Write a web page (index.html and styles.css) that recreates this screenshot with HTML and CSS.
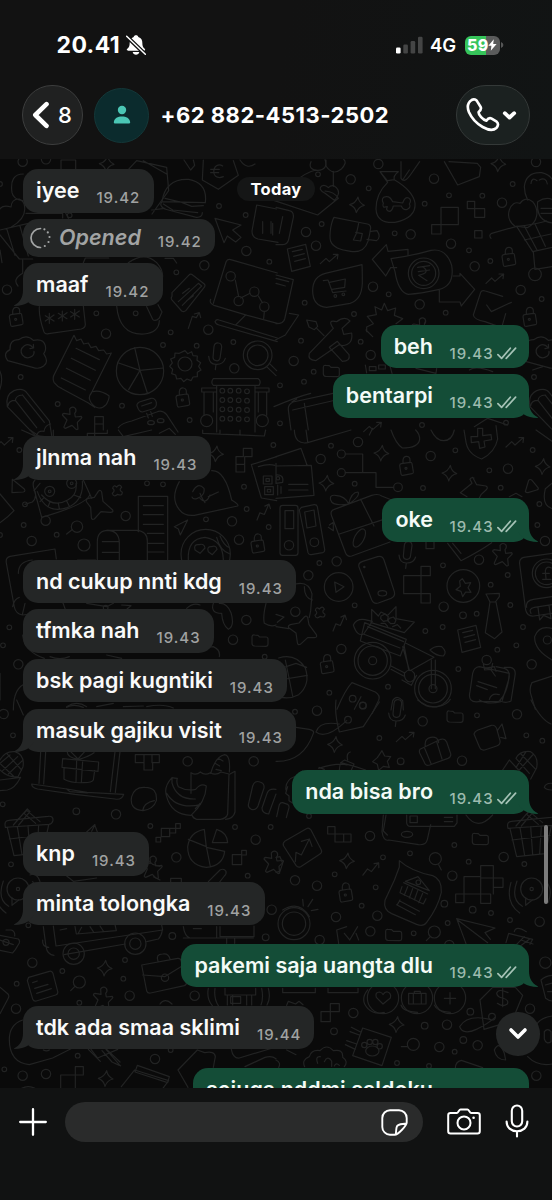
FILE: index.html
```html
<!DOCTYPE html>
<html lang="id">
<head>
<meta charset="utf-8">
<title>Chat</title>
<link rel="stylesheet" href="styles.css">
</head>
<body>
<header class="top">
  <div class="status">
    <span class="clock">20.41</span>
    <svg class="bell" width="20" height="20" viewBox="0 0 60 60"><path d="M30 1c4 0 6 2 7 5 9 3 12 10 12 18 0 10 2 13 7 17 3 4 1 6-2 6H6c-4 0-5-3-2-6 5-4 7-8 7-17 0-9 4-15 12-18 1-3 3-5 7-5zM20 51h20c-2 11-18 11-20 0z" fill="#fff"/><path d="M2 4l56 54" stroke="#111212" stroke-width="12"/><path d="M2 4l56 54" stroke="#fff" stroke-width="4.5" stroke-linecap="round"/></svg>
    <svg class="signal" width="27" height="18" viewBox="0 0 27 18"><rect x="0" y="11.5" width="4.6" height="6" rx="1.3" fill="#fff"/><g fill="#444545"><rect x="7.3" y="8.5" width="4.6" height="9" rx="1.3"/><rect x="14.6" y="5" width="4.6" height="12.5" rx="1.3"/><rect x="22" y=".8" width="4.6" height="16.7" rx="1.3"/></g></svg>
    <span class="net">4G</span>
    <span class="battery"><span class="level">59</span><svg width="9" height="12" viewBox="0 0 9 12"><path d="M5.8.2L.4 6.8h3L2.8 11.8 8.6 5H5.2z" fill="#fff"/></svg></span>
    <svg class="nub" width="3" height="6" viewBox="0 0 3 6"><path d="M0 0q2.4 1 2.4 3T0 6z" fill="#555656"/></svg>
  </div>
  <div class="nav">
    <div class="back"><svg width="18" height="28" viewBox="0 0 18 28"><path d="M14.5 3.2L3.3 14l11.2 10.8" fill="none" stroke="#fff" stroke-width="4.6" stroke-linecap="round" stroke-linejoin="round"/></svg><span>8</span></div>
    <div class="avatar"><svg width="18" height="20" viewBox="0 0 18 20"><circle cx="9" cy="5" r="4.2" fill="#4bc6b4"/><path d="M.8 17.5C1 13 5 11.4 9 11.4s8 1.6 8.2 6.1q0 1-1.2 1H2q-1.200 0-1.200-1z" fill="#4bc6b4"/></svg></div>
    <h1 class="name">+62 882-4513-2502</h1>
    <div class="call"><svg width="34" height="34" viewBox="0 0 102 102"><path d="M17 6C24 2 31 5 34 11L44 27C47 33 44 37 38 42C36 50 52 66 61 68C66 61 71 59 77 62L92 71C98 76 97 84 91 90C82 98 66 96 50 87C32 77 17 61 9 43C3 28 5 14 17 6Z" fill="none" stroke="#fff" stroke-width="8" stroke-linejoin="round"/></svg><svg width="15" height="11" viewBox="0 0 15 11"><path d="M2.800 3.200l4.700 4.300 4.700-4.300" fill="none" stroke="#fff" stroke-width="3.800" stroke-linecap="round" stroke-linejoin="round"/></svg></div>
  </div>
</header>

<main class="chat">
<svg class="doodles" width="552" height="929" viewBox="0 159 552 929">
<defs>
<circle id="s" r="7"/><circle id="m" r="10"/><circle id="b" r="14"/>
<path id="spark" d="M3-24Q6-6 22 1Q5 4-2 23Q-5 6-22-1Q-4-5 3-24z"/>
<g id="lock"><path d="M-19-8q0-5 5-6l26-4q5-1 6 4l4 24q1 5-4 6l-27 5q-5 1-6-4zM-9-15v-10q2-12 12-11 9 1 9 11v8"/><circle r="3"/></g>
<path id="trend" d="M-27 13l17-16 10 10 25-22M12-15h14l-2 14"/>
<path id="pin" d="M-8-31q8-10 17-2 5 8-2 15l2 11 18-2q3 3 0 6l-12 12 2 20q-3 3-6 1l-12-12-20 9q-5-1-4-5l9-20-14-15q0-4 5-5l18 3z"/>
<path id="folder" d="M-24-12q1-6 7-5l11 1 5 5h19q6 0 6 6v15q0 7-7 7l-34-1q-7-1-7-8z"/>
<g id="mic"><path d="M-8-32q2-12 13-11 10 1 10 12l-5 34q-3 9-12 7-9-1-9-10zM-24-3q2 24 22 24 22 1 28-18M-2 21l-2 16"/></g>
<g id="page"><path d="M-33-28l55-14 14 66-56 15zM-18-20l30-7M-14-6l32-8M-11 9l32-8"/></g>
<g id="pencil"><path d="M-48-45q-7-35 20-48 27-10 38 6l68 85 8 49-50-5zM-24-64l64 82M-3-80l66 82M40 43q2-17 22-14 3-19 20-22M-46-48q2-16 22-16 2-15 21-16"/></g>
<g id="cloud"><path d="M-55 22q-16-22 7-33-2-30 26-30 24-18 44 2 30-7 36 16 3 15-5 24 17 25 0 37-14 11-33 4z"/><path d="M21-17q-11-14-26-6-16 12-6 28 13 15 29 4 8-8 6-15M12-14l11-2-1-11"/></g>
<g id="cart"><path d="M-65-5q-8-9 2-15l75-21 48 76 90-20M12-41q50-4 90-16M35 0l80-18M35-42l38 72M68-46l30 65M62 36l5 52 75-12"/><circle cx="67" cy="103" r="19"/></g>
<g id="basket"><path d="M-74-13q-5-20 10-21l118-12q16-2 15 12-2 10-12 12l-117 8zM-68-12l20 84 86-9 18-83M-38-15l14 84M-6-18l6 84M26-20l-5 84M-62 22L52 8M-50-20l42-48 8 8-34 40M30-30l-40-34-8 9 35 30"/></g>
<g id="radar"><circle cx="0" cy="0" r="33"/><circle r="5"/><path d="M-18 27v22l20-16M-44-24q-20 55 16 76M-62-20q-18 60 26 92M44-22q20 25 6 62"/></g>
<g id="case"><path d="M-55-35l108-20q8-1 10 6l16 65q2 8-6 11L-28 49q-9 2-12-6zM-52-5l66 5 56-34M-6-46q-8-22 14-22 18-3 22 15"/><circle cx="15" cy="3" r="11"/></g>
</defs>
<g class="ink">
<g transform="translate(0 150) scale(.33333)">
<path d="M183 65V30h44v35M455 180l40-5M365 80l45-48 90 20 6 70-50 70M500 72l-70-40M552 30l12 18 8 12 12-14-4-16M610 30l-3 60 48 28 60-42-15-44M720 30q20 30 45 12M-5 185q10-24 38-14 2-25 25-24 18 8 16 32 0 28-40 52M70 72q-42 0-34 56 4 20 32 24M0 240l85-20 12 95M0 255l58 72h40M20 236l25 80M60 228l25 90M0 300l6 38M68 330v40q-32 18-14 38M78 190h110v14M205 205l-10-20"/>
<path d="M486 155q10-70 80-67 57 10 50 70zM486 155q-10 12 8 22l95 25q18 1 18-14M495 145l50 12 30 12 35-2M490 162l28 18 75 8M645 205l78 20-25 15 25 22-16 14-25-18-10 20zM770 165l60 12M770 165q-10 55-14 78 0 20 18 24l60 10M788 215v35M818 220v35"/>
<path d="M516 428l50-52q6-6 12-1l34 26q6 5 0 12l-54 68q-6 6-13 2l-28-32q-6-6-1-12zM535 455l60-55 10 8-58 58M548 430l20-15M560 452l20-15M640 460l38-124q4-10 14-7l140 40M632 448q-5 12 10 18l100 30 90 24M645 515q4-8 12-5l175 54M645 515q2 8 12 10l175 50M735 497l-28 28M706 390l10 50M722 444l28-14M775 438l12 20M793 485l-2 20"/>
<circle cx="692" cy="379" r="14"/><circle cx="716" cy="453" r="14"/><circle cx="763" cy="425" r="14"/><circle cx="793" cy="470" r="14"/>
<path d="M118 470q-2 30 14 76 4 8 14 5l98-14q12-3 12-14l-6-55M148 490v30M136 497l26 16M162 495l-26 18M187 483v30M175 490l26 16M201 488l-26 18M224 478v30M212 485l26 16M238 483l-26 18M350 468q8 88 82 84 45-5 46-40M440 470l18 38q8 8 20-4l8-18-12-22M385 338q50-35 85 0 25 28 15 55M250 338l6-14h70M495 325h25l10 14M565 535l12-36 12 4 8-14M583 492l15-4 4 15"/>
<path d="M222 556l8 16 13-5 8 15 14-3 8 14 15-4 8 13 15-2 9 12 14-3-60 120q-12 14 0 30 22 28 45 4 10-17 8-26-28-18-48-12M222 556l-58 115q-8 14-2 26 10 13 24 19l78 42 20 14M228 595l70 34M214 625l72 36M199 655l72 36M184 684l72 36"/>
<circle cx="420" cy="663" r="71"/><path d="M420 661l-16-68M420 661l-64-22M420 661l70-7M420 661l22 68M420 661l-34 58"/>
<circle cx="555" cy="642" r="21"/><path d="M555 602l8 9 12-6 4 12 13 1-1 13 11 7-6 11 7 11-11 7 0 13-13 1-6 11-12-5-10 8-8-10-13 2-3-12-12-4 3-13-9-9 8-10-5-12 12-5 1-13 13 1z"/>
<circle cx="773" cy="616" r="43"/><circle cx="773" cy="616" r="31"/><path d="M800 650l28 27M808 640l22 22M-5 655q20 30 0 75"/>
<path d="M640 686h135q10 8 2 20H640q-9-9 0-20zM650 706v140M765 706v140M650 714h-45v12h45M765 714h42v12h-40M612 726v70M640 726v60M775 726v60M800 726v70"/><circle cx="620" cy="812" r="18"/><circle cx="787" cy="812" r="18"/>
<g><use href="#s" x="667" y="722"/><use href="#s" x="691" y="722"/><use href="#s" x="716" y="722"/><use href="#s" x="741" y="724"/><use href="#s" x="667" y="750"/><use href="#s" x="691" y="750"/><use href="#s" x="716" y="751"/><use href="#s" x="741" y="752"/><use href="#s" x="667" y="778"/><use href="#s" x="691" y="778"/><use href="#s" x="716" y="779"/><use href="#s" x="741" y="780"/><use href="#s" x="667" y="806"/><use href="#s" x="691" y="806"/><use href="#s" x="716" y="807"/><use href="#s" x="741" y="808"/></g>
<path d="M412 770q-4-8 6-14l35-11q12-2 16 12 2 15-12 20l-30 9q-10 0-15-16zM425 768l30-10M355 833q10-14 40-20l75-27q16-8 30 8l34 52M440 790l5 14M452 785l5 14"/><ellipse cx="453" cy="818" rx="10" ry="6"/><ellipse cx="482" cy="812" rx="10" ry="6"/><path d="M284 840v-40h26v40M284 822h26"/>
<use href="#pencil" x="70" y="815"/><use href="#cloud" x="78" y="610"/><use href="#lock" x="47" y="508"/><use href="#lock" x="547" y="750"/><use href="#pin" x="217" y="808"/><use href="#spark" x="320" y="42"/><use href="#mic" x="650" y="622"/>
<path d="M668 48q-12-8-22 2-10 15 0 28 10 8 24 2M632 58h26M632 68h24"/>
<g><use href="#b" x="68" y="35"/><use href="#b" x="138" y="28"/><use href="#s" x="0" y="102"/><use href="#s" x="657" y="168"/><use href="#s" x="737" y="195"/><use href="#s" x="209" y="196"/><use href="#b" x="739" y="303"/><use href="#s" x="808" y="335"/><use href="#b" x="613" y="346"/><use href="#s" x="529" y="367"/><use href="#b" x="21" y="419"/><use href="#s" x="289" y="490"/><use href="#s" x="407" y="490"/><use href="#b" x="318" y="551"/><use href="#s" x="512" y="547"/><use href="#b" x="625" y="539"/><use href="#s" x="489" y="585"/><use href="#s" x="590" y="587"/><use href="#s" x="700" y="576"/><use href="#b" x="703" y="655"/><use href="#s" x="62" y="681"/><use href="#s" x="173" y="762"/><use href="#s" x="366" y="767"/><use href="#s" x="569" y="810"/></g>
</g>
<g transform="translate(276 150) scale(.33333)">
<path d="M105 35q-10 24 20 26 32-2 22-32M150 30v18q20 30 45 10 20-20 8-30M120 60q-28 5-70 40L-25 145l150 50 62-50q-12-20-40-22M172 64v45M147 130q-22-12-10-22 10-6 20 5 12-12 24 0 16 16-6 38zM375 35v50q10 16 28-10l28-40M505 35l40 70 65-25 4-28-10-12-85-5M380 90l20-30"/>
<path d="M312 65l55 0q-16 12-12 24 56 33 62 70 4 45-60 58-55 4-57-40 0-46 35-80zM335 92l20-3M312 65l22 27"/><path d="M334 170q-18 5-12-10-9-18 8-20 12-2 20 15l30 4q6-20 18-15 10 6 2 18 6 10-6 16-12 4-18-10l-24 0q-4 16-12 16-12-2-6-14z"/>
<path d="M174 202l100 20q10 2 10 12-2 16-8 40-12 36-52 30-50-5-60-30-4-12 0-40 4-22 10-32zM248 220l-6 28-10 22 22 3 5-22-20-4M285 244l18-2q14 20-2 30l-28-4"/>
<path d="M0 172l40 10q14 3 12 20l-14 66q-3 15-18 16l-20 0M-15 215v35M20 200l-10 50M0 375l52 14-26 118q-4 15-26 14M40 490l28 5-40 60-30 15M0 400l28 8M0 385l38 10"/>
<path d="M289 328l42-44 5 20 60-6 0 18M289 328l40 50 15-25 18 0"/><path d="M345 326q60-8 120-25 45-8 62 45 10 62-40 73-55 12-90 14-30-5-40-68zM532 378l20 0v-8l44 48-40 50-4-12h-62v-36"/><circle cx="443" cy="370" r="46"/><circle cx="443" cy="370" r="36"/><path d="M425 352l36-5M427 365l34-5M440 350q26 18-12 26l25 16"/>
<path d="M258 344l-110 26q-38 10-38 52 0 46 42 50l70-12q35-10 37-60 0-40-1-56zM142 392l14-2 14 38 40-5M160 397l48-10-2 25-38 6"/><circle cx="178" cy="438" r="4"/><circle cx="202" cy="433" r="4"/>
<path d="M495 172h52v52h-52zM467 224h28v28h-28zM574 154h22v22h-22zM596 176h30v26h-30zM596 242h22v22h-22z"/>
<path d="M272 545v-14l20-10-18-22 27-5-4-24 20 10 8-20 10 22 24-8-4 22 25 10-20 15M290 560l-20-20M592 495l22-68q4-8 14-4l52 16M592 495q2 14 35 20l50 18 12-42M632 465l14 20 60-28"/>
<path d="M100 610l72-75q-20-28 10-20 25-18 40-2l-24 22 5 18 24-4q5 35-28 38l-10-3-70 48q-25-2-19-22zM160 592l24-18 35 40q5 20-20 20zM92 510l28 5 5 14-10 10-16-8zM122 535l22 22"/>
<path d="M745 110q5-45 52-42 35 8 40 42M745 110q0 20 10 40M700 180q10-28 32-20 15-22 38-5 16 20 12 42-4 24-28 36l-38-5q-25-20-16-48zM785 155q25-16 45-6v70q-50-5-45-64zM795 175h35M795 190h35M765 100q2-20 18-8M790 90q20-10 24 12"/>
<path d="M-6 770q70-30 110-40M45 840l-8-60q-2-16 14-24l120-26M50 780l130-30M85 760l12 80M48 755l14-8M268 645l4 24M340 640l8 30M280 650h20v12h-20zM308 645h20v12h-20zM420 655l60 15 2-15M580 660q20-15 70 5M770 660l30-10M595 830l40-25 60 20"/>
<use href="#cart" x="710" y="270"/><use href="#cloud" x="795" y="610"/><use href="#pencil" x="810" y="815"/>
<use href="#page" x="67" y="325"/><use href="#trend" x="160" y="328"/><use href="#trend" x="657" y="387"/><use href="#lock" x="697" y="328"/><use href="#lock" x="760" y="508"/><use href="#pin" x="438" y="540"/><use href="#folder" x="166" y="663"/><use href="#spark" x="243" y="165"/><use href="#spark" x="667" y="42"/><use href="#trend" x="290" y="832"/>
<g><use href="#b" x="307" y="42"/><use href="#s" x="126" y="73"/><use href="#b" x="224" y="88"/><use href="#s" x="278" y="115"/><use href="#b" x="474" y="86"/><use href="#b" x="780" y="36"/><use href="#s" x="710" y="102"/><use href="#s" x="519" y="136"/><use href="#s" x="619" y="137"/><use href="#s" x="446" y="161"/><use href="#b" x="678" y="158"/><use href="#s" x="137" y="222"/><use href="#b" x="90" y="246" /><use href="#b" x="120" y="287"/><use href="#s" x="356" y="250"/><use href="#b" x="404" y="253"/><use href="#b" x="525" y="281"/><use href="#s" x="579" y="301"/><use href="#s" x="643" y="333"/><use href="#b" x="596" y="349"/><use href="#b" x="291" y="410"/><use href="#s" x="338" y="433"/><use href="#s" x="86" y="458"/><use href="#b" x="431" y="463"/><use href="#s" x="509" y="488"/><use href="#s" x="234" y="492"/><use href="#b" x="734" y="420"/><use href="#s" x="797" y="447"/><use href="#s" x="75" y="572"/><use href="#s" x="254" y="575"/><use href="#b" x="284" y="615"/><use href="#b" x="53" y="633"/><use href="#s" x="113" y="665"/><use href="#s" x="84" y="695"/><use href="#s" x="12" y="706"/><use href="#s" x="774" y="681"/><use href="#s" x="438" y="825"/><use href="#s" x="690" y="818"/><use href="#s" x="12" y="820"/></g>
</g>
<g transform="translate(0 430) scale(.33333)">
<path d="M65 0l50 22M90 0l30 20M160 0v22M262 20v-10h60V0M284 20V0M355 0l15 20 85-20M478 10l30-15 18 18M608 0v10l185 8 4-18M660 0v10M720 0v15"/>
<path d="M37 148l35 28q6 8-2 10l-34 2zM0 192l42 50q-18 20-42 36M75 223l22-7q14-12 8-32M105 150q-10 8-2 30l22 82q140-40 145-70M275 205l-25-55M120 160l-18 22M112 185q25 70 90 48 50-20 45-80M125 195q35 40 78 15 30-15 25-50M130 205l-10 10M150 215l-6 16M175 220l3 16M200 213l8 16M222 195l20 8"/><circle cx="149" cy="184" r="15"/><circle cx="149" cy="184" r="4"/><circle cx="215" cy="160" r="15"/><circle cx="215" cy="160" r="4"/>
<path d="M305 186l4 28 29 26q3 7-7 7l-28-2-20 22q-8 4-9-5l-2-30-12-16q-5-7 5-11l18-3 12-18q6-6 10 2zM338 175q2-12 12-4 10-12 15 1-10 8 2 15 0 12-14 6-12 10-16-3 10-8 1-15z"/>
<path d="M415 305V199h88v190M430 227h60M430 254h60M430 283h60M442 310h50M442 340h50M442 366h50M292 390v-55q0-34 32-34h85q34 2 33 34v55M320 301q38 0 38 38v50M307 335h48M307 367h48M232 390h55"/>
<path d="M538 155q-28 50 0 84 15 20 45 17l130-28q5-4-18-18-20-90-60-88M578 185q15-30 34-10 4 20-20 30-12 5-16-4M600 205q18 20 30-10M600 190q8 20 15 28M625 200l30-14M523 290l40-20-22 45-6-18z"/>
<path d="M200 312l16-13"/><circle cx="231" cy="290" r="17"/><circle cx="252" cy="345" r="18"/>
<circle cx="617" cy="372" r="74"/><path d="M565 390q-4-64 50-68 54 8 55 68M585 360q-5-18 12-16 16-5 18 10l-15 16zM625 365q-6-16 10-15 14-5 16 8l-14 16zM650 322q10 40 40 50M660 318q12 30 28 34"/>
<path d="M708 126V80h22V55h26v25h-22v46zM708 103h24M830 80l-76 24 30 100 46 8M775 110q30-10 50-4M790 138h26v24h-26zM794 170h26v24h-26zM798 146h10v8h-10zM802 178h10v8h-10z"/>
<path d="M165 357l-135 22q-14 4-11 20l24 132q4 20 24 24l130-14-8-22M38 530q5-24 20-28M165 357l4 30M55 430q0-36 42-40M75 520l-8 34M640 520q-10 30 25 30 2 35 20 48 20-10 8-50-12-30-35-28M798 520q-10 40-5 60 20 12 35 5M260 520l60 10 20-10M365 525l28 2-12 10M560 535q20-18 40-10M560 660l80-10q22 10 18 30M40 840q0-70 40-80M0 730v80M68 615q5 50 65 70M150 680q30 12 58 0M320 675l45 10M200 830q30-20 60 0M290 830l50-10M370 830l60-2M440 830q50-10 80 4"/>
<use href="#trend" x="13" y="38"/><use href="#trend" transform="translate(790 247) rotate(-25)"/><use href="#spark" x="648" y="72"/><use href="#lock" x="772" y="348"/><use href="#folder" x="780" y="632"/>
<g><use href="#s" x="58" y="60"/><use href="#s" x="441" y="160"/><use href="#s" x="489" y="163"/><use href="#s" x="732" y="170"/><use href="#s" x="75" y="223"/><use href="#b" x="137" y="272"/><use href="#s" x="71" y="285"/><use href="#b" x="377" y="258"/><use href="#s" x="618" y="268"/><use href="#s" x="740" y="237"/><use href="#b" x="696" y="274"/><use href="#s" x="806" y="291"/><use href="#s" x="170" y="314"/><use href="#b" x="95" y="333"/><use href="#s" x="0" y="315"/><use href="#b" x="717" y="329"/><use href="#s" x="820" y="45"/><use href="#b" x="739" y="570"/><use href="#b" x="699" y="629"/><use href="#s" x="28" y="592"/><use href="#s" x="9" y="646"/><use href="#b" x="55" y="703"/><use href="#s" x="794" y="680"/><use href="#s" x="317" y="533"/></g>
</g>
<g transform="translate(276 430) scale(.33333)">
<path d="M55 0q2 45 40 38l130-38M90 0l5 35M345 0q14 40 34 54 48 0 52-26 0-16-12-28M465 0q15 32 38 32 25 0 32-32M564 0l5 30q4 42 48 57 40-20 48-60l-5-40M585 20h20V-5h15v22l25-3 2 15-23 4 3 18-16 4-3-20-22 3zM280 15l10-20M780 0l50 35"/>
<path d="M0 80l75-25 18 50M0 108l106-2 8 90-114 9M0 100v60M38 163h58M38 180h58M0 135q25-2 20 22l-20 3M5 165v30M15 170v20"/><circle cx="6" cy="145" r="5"/>
<circle cx="196" cy="72" r="12"/><circle cx="196" cy="128" r="12"/><circle cx="366" cy="172" r="13"/><path d="M208 72h52v54M208 128h92v44h52"/>
<path d="M20 226h38q8 0 8 8v134q0 8-8 8H20q-8 0-8-8V234q0-8 8-8zM27 242h26v54H27zM76 232l38-8q8-1 10 6l22 128q1 8-6 10l-34 6q-8 1-10-6L70 240zM86 246l28-6 6 48-27 6z"/><circle cx="39" cy="346" r="14"/><circle cx="115" cy="337" r="13"/>
<path d="M175 238q-14 4-8 20l42 112q6 12 18 8l115-42M175 238l112-42q20-6 30 2l30 12M190 312l140-46M254 208l40 80M218 222q-48 8-54-12-4-16 14-14 30 2 40 26zM218 222q8-36 28-36 8 12-28 36z"/><ellipse cx="250" cy="324" rx="14" ry="30" transform="rotate(28 250 324)"/><path d="M160 285l12-8 0 25-15-10"/>
<path d="M590 142l12 22 28 4q8 5 0 12l-15 14-5 10M553 188l35-28-6-12q4-8 12-4M553 188l20 12M748 185l10-34q4-5 10 0l18 22q3 5-4 7l-26 8q-6 0-8-3zM828 160l-20 16q-12 50 20 60M700 200l20-10 18 10"/>
<circle cx="188" cy="471" r="43"/><path d="M176 456l28 14-24 17zM260 394l45-14q14-4 19 10l31 95q4 14-10 20l-38 14q-14 4-20-10l-38-98q-4-12 11-17z"/><ellipse cx="319" cy="490" rx="13" ry="8"/><circle cx="265" cy="411" r="2"/>
<path d="M435 409h28v28h-28zM383 437h52v54h-52zM435 437v54M435 491h28v28h-28zM450 330v26h24v-26M515 340l40 52q55-28 92-54M530 340l25 30"/>
<circle cx="562" cy="468" r="49"/><path d="M559 446l9 14 16-2-8 15 9 14-16-1-9 14-5-16-15-5 13-10-2-16z"/>
<path d="M828 370l-85 12q-14 4-12 20l18 138q5 20 24 18l55-8M752 532q-4-20 20-24l55-8M765 550q-8-14 10-18l54-8M786 532l5 38 12-14 22 10-6-40"/><circle cx="812" cy="430" r="43"/><circle cx="812" cy="430" r="34"/><path d="M826 414q-15-8-18 8l2 24M800 430h20M800 448h25"/>
<path d="M630 492l40-2 0 10-12 16h-16zM642 516h18l18 90-22 20-28-18zM58 462q40-10 50 30l-4 50-4 20M85 470q0 35 25 40M95 562l4 22 22 30q4 8-6 9h-20l-22 20q-8 4-9-6l-4-28-22-16q-3-6 5-9l26-5 16-18q6-6 10 1zM0 553l24 8-20 16M0 590l38 6M118 541q2-12 12-4 10-12 15 1-10 8 2 15 0 12-14 6-12 10-16-3 10-8 1-15z"/>
<path d="M232 585q10-20 35-16l22 5-26 38q-20 8-31-27zM266 578l125 50-18 50-120-45zM275 590l108 45M262 612l110 42M287 572v-34l20 20 8-12 20 10 25-26v36l55 10-30 32-100-30zM390 640l84 42-72 40M380 650l20 70M384 645l14 74M345 708l40 20M345 718l38 20M466 690v86M478 690v86M462 660q15-14 35-10 18 16 5 28-22 0-40-18zM385 730q16-20 30 0 5 20-12 26-18 0-18-26zM378 750l28 16 16-30"/><circle cx="290" cy="692" r="55"/><circle cx="290" cy="692" r="44"/><circle cx="290" cy="692" r="12"/><circle cx="471" cy="776" r="55"/><circle cx="471" cy="776" r="43"/><circle cx="471" cy="776" r="12"/>
<path d="M315 558l12-6 10 8-3 12-12 2-8-8zM340 565l12-4 8 9-4 10-12 1-8-8zM315 580l12 0 8 9M350 590l14-6 10 10"/>
<path d="M8 684q50-16 80 30 16 50-20 80-30 16-62 5M28 690l22 108M0 720l60-20 32 12M10 750l84-14"/>
<path d="M590 730q4-18 20-20l90 20q-4 60-32 85l-60 0q-34 4-26-30zM640 808q6-20 30-14M660 710l25 5q18 5 14 30l-20 66M685 712h18q18 4 14 25l-12 76q-15 8-32 0M606 755l56 18M602 767l32 12"/><circle cx="632" cy="690" r="14"/><path d="M622 702l4 18 18-2 14 20M650 700l-4 18M625 715l30-5 5 14"/>
<path d="M828 595q-40-10-52 25-2 40 52 70M828 738l-60 20q-10 18-2 40l12 40"/><circle cx="814" cy="630" r="12"/>
<path d="M228 758l70 28q16 10 10 25l-20 40M228 758q-20 20-45 80M345 840l5-28q12-20 30 0l2 28"/><circle cx="230" cy="806" r="10"/><circle cx="260" cy="826" r="10"/><path d="M255 800l-20 38"/>
<use href="#page" x="578" y="628"/><use href="#mic" x="393" y="378"/><use href="#lock" x="390" y="115"/><use href="#lock" x="152" y="710"/><use href="#trend" x="717" y="38"/><use href="#trend" transform="translate(190 580) rotate(-25)"/><use href="#pin" x="680" y="377"/><use href="#spark" x="316" y="70"/><use href="#spark" x="151" y="160"/><use href="#spark" x="520" y="130"/><use href="#spark" x="800" y="110"/>
<g><use href="#b" x="246" y="36"/><use href="#s" x="165" y="47"/><use href="#b" x="134" y="87"/><use href="#b" x="464" y="78"/><use href="#s" x="538" y="61"/><use href="#s" x="640" y="121"/><use href="#b" x="696" y="116"/><use href="#s" x="770" y="60"/><use href="#s" x="236" y="161"/><use href="#s" x="441" y="174"/><use href="#s" x="674" y="173"/><use href="#s" x="790" y="222"/><use href="#s" x="784" y="285"/><use href="#b" x="807" y="333"/><use href="#s" x="130" y="399"/><use href="#b" x="182" y="394"/><use href="#b" x="97" y="436"/><use href="#s" x="501" y="406"/><use href="#b" x="609" y="389"/><use href="#s" x="695" y="435"/><use href="#s" x="644" y="464"/><use href="#s" x="236" y="526"/><use href="#b" x="58" y="545"/><use href="#b" x="503" y="530"/><use href="#m" x="561" y="556"/><use href="#s" x="602" y="551"/><use href="#s" x="703" y="525"/><use href="#s" x="448" y="603"/><use href="#s" x="500" y="591"/><use href="#s" x="741" y="591"/><use href="#s" x="721" y="646"/><use href="#s" x="664" y="659"/><use href="#b" x="196" y="657"/><use href="#b" x="767" y="703"/><use href="#s" x="547" y="717"/><use href="#s" x="336" y="770"/><use href="#s" x="160" y="788"/></g>
</g>
<g transform="translate(0 700) scale(.33333)">
<path d="M50 0l20 45M200 22q20-12 50 0M0 180q15-28 45-25 30 10 24 45l-15 30q-30 4-54-20M0 190l30-25M8 212l45-42M25 222l42-40M20 160l45 50M0 190l40 38M0 240l62-8q-18 35-40 38l-22 2"/>
<path d="M122 155l-5 95M137 155l-6 97M345 155l-14 120M360 155l-14 122M95 252l106 15 60 10 110 6q-6 18-26 14l-120-14-112-16q-18-4-18-15zM200 267l10 8 52 4M188 176l108 10-2 28-108-12zM192 204l0 34q22 12 60 10 24 0 28-8l4-28M230 180l-2 65M248 182l-4 66M236 178q-35-5-34-22M238 178q30-10 44-20M212 155l22 22 20-22"/>
<path d="M406 164h72v24H458v22h-26v-22h-26zM432 164v24M456 164v24M516 233q8 2 16 2-4 12 3 25 25 14 52 8 16-20 32-10-2 48-46 88-60-2-74-60-8-26 17-53zM516 233v16q14 50 70 48M500 280q30 50 102 34M600 310l-14 16M573 280v-62q15 10 28-2 14 12 30 2 16 10 32-2l24 6-4 120q-4 14-22 16H590q-10-2-14-12M690 222l15-8v122q-5 20-28 22M632 220q14-50 42-56 18 2 14 52M645 190l14 8M655 175l14 8M648 208l16 4M395 290q8-30 40-28 38 0 34 40-8 25-40 30-42-4-34-42zM428 332q4-24 35-30"/>
<path d="M758 258q6-18 22-12 14 4 12 18l-18 54q-6 14-20 10-12-6-8-18zM802 278q6-14 26-10M786 324q0 16 20 18l22-60M786 324l16-46M260 396l24-22 8 22M275 394l10-20"/>
<path d="M468 412h14v14h-14zM484 385h25v25h-25zM509 385h18v14h-18zM527 371h14v14h-14zM697 464h28v30h-28zM725 451h14v14h-14zM512 545v-10h32v10M90 525q20-10 30 20M200 528l20 16 70-10M440 485l-4-12 22 20 22 6M460 530l20 10"/>
<path d="M613 388q-44 8-50 52 0 55 56 62 50-4 55-48l-55-12zM650 388q32 10 33 40l-46 0zM619 440l12 60M619 440l-54-22M625 545l35-35q12-6 18 4 2 8-5 14l-14 18"/>
<path d="M130 680l8 60q4 25 24 26M160 678l8 60 320-48-4-20M192 764l184-32M440 725l35-8q10-10 12-28M128 720q-2 20 18 22M225 680l4 22 120-10-4-18M180 690l20-4M245 682l-10 18M270 680l10 15M300 678l10 15M550 680q4 30 20 34h80l0-34M660 680v30h102V678M550 714h210M680 714v16M704 714v16M580 686h24"/>
<circle cx="221" cy="761" r="32"/><circle cx="221" cy="761" r="17"/><circle cx="406" cy="731" r="32"/><circle cx="406" cy="731" r="17"/>
<path d="M-5 705l60 12q5 4 3 12l-12 20-8 10-38-8M0 720l40 14M18 690h16q12 4 10 18"/><circle cx="18" cy="727" r="9"/>
<use href="#basket" x="90" y="395"/><use href="#radar" x="54" y="567"/><use href="#pin" x="458" y="505"/><use href="#pin" x="822" y="490"/>
<g><use href="#b" x="11" y="42"/><use href="#s" x="39" y="106"/><use href="#b" x="563" y="184"/><use href="#b" x="761" y="184"/><use href="#s" x="8" y="313"/><use href="#m" x="229" y="334"/><use href="#b" x="348" y="343"/><use href="#s" x="451" y="378"/><use href="#s" x="705" y="381"/><use href="#s" x="812" y="381"/><use href="#b" x="767" y="419"/><use href="#b" x="529" y="472"/><use href="#s" x="33" y="493"/><use href="#s" x="743" y="527"/><use href="#b" x="815" y="629"/><use href="#m" x="517" y="708"/><use href="#m" x="797" y="712"/><use href="#s" x="85" y="676"/></g>
</g>
<g transform="translate(276 700) scale(.33333)">
<path d="M180 0q-5 40 10 96l72-16 48-74M190 72q-60-10-70 24 30 24 92-34M60 82l40 6q16 4 12 12-30 86-112 84M128 205q60-18 85-10M145 208l-16-6M190 210q0-24 16-30l28 12-8 18M215 180q-5-20 8-24M194 188q40 10 75 22M425 0q30 24 60 20 30-6 38-22M610 0q25 15 65 5M765 0q30 60 60 72M30 270q-4-30 30-42l20-15M35 260l-6 20 10 8 0 14 12 8"/>
<path d="M432 148l62-30q12-4 18 8l12 35q2 10-8 14l-55 20q-12 4-16-8l-14-28q-2-8 1-11zM446 145l20 48M482 125l16 52M448 140q-4-24 16-28 22-4 24 16M594 102q2-8 12-12l40-14q12-2 16 10l10 36q2 12-10 16l-36 12q-12 2-16-10zM664 92l14-20 12 44-16-4M318 152l8 16 18 2-10 14 6 18-18-3-14 12-4-18-14-8 14-12z"/>
<path d="M680 210l20-30 28 30M720 175q12-24 44-20 24 14 18 48l-18 34M720 175l40 45M735 162l42 44M750 155l-30 48M770 165l-40 45M805 262q4-14 24-12M805 262q4 8 24 8M322 345l-4 50q4 30 20 25l90 14q22 2 26-15l10-45M330 345l-8 48 12 12M392 345v24q2 12 15 10h128l8-10v-24M505 352h25M505 365h25M402 348h22v20h-22z"/><ellipse cx="393" cy="403" rx="17" ry="9"/><path d="M570 345q35 50 80 0M2 350l8-36q4-8 10-6l15 5q5 4 4 10l-8 30"/>
<path d="M26 424l65-38q8-4 14 4l31 60q3 8-4 12l-58 38q-8 4-14-4l-37-58q-4-8 3-14zM58 485l2-28 16 8 24-48M76 424l24-7 8 22M155 380h22v22h-22zM177 402h26v24h-26zM203 402h22v24h-22zM0 472l12-2 8 20-8 24-12 3"/>
<path d="M370 482q35 32 100 45 28 10 26 50-10 45-44 90-10 14-30 6l-75-32q-26-12-20-40l28-60 15-40zM388 544l38-14 34 42zM383 548l72 34M378 560l-6 18 70 34 8-16M395 560l-10 26M410 566l-10 28M425 572l-10 28M440 580l-12 28M370 602l60 32M362 614l56 30M372 600l-8 14"/><circle cx="427" cy="547" r="7"/>
<path d="M564 530h50v52h-50zM614 497h38v37h-38zM652 534h29v28h-29zM539 582h25v26h-25zM614 582h30v28h-30zM614 530v52M652 534v48"/>
<circle cx="54" cy="671" r="48"/><circle cx="54" cy="671" r="35"/><path d="M20 630q50-30 80 20M82 618l-2-20M96 620l14-22M106 632l20-4M182 690l30-10M205 700l16 20 24-40M182 690l6 40M240 700l8 20M542 656l115 28-30 14 16 20M542 656l28 75M545 660l90 68M698 700l72 18-8 15M698 700l-8 28M715 695q4-20 36 0"/>
<use href="#basket" x="770" y="398"/><use href="#radar" x="767" y="567"/><use href="#mic" x="362" y="42"/><use href="#trend" x="388" y="112"/><use href="#trend" transform="translate(285 508) rotate(-10)"/><use href="#folder" x="537" y="50"/><use href="#folder" x="613" y="417"/><use href="#folder" x="353" y="705"/><use href="#spark" x="177" y="134"/><use href="#spark" x="213" y="483"/><use href="#lock" x="208" y="585"/>
<circle cx="478" cy="476" r="18"/><path d="M488 494l8 16"/><circle cx="475" cy="696" r="18"/><path d="M463 710l-12 12"/>
<g><use href="#b" x="123" y="32"/><use href="#s" x="57" y="35"/><use href="#m" x="261" y="17"/><use href="#m" x="216" y="59"/><use href="#b" x="440" y="64"/><use href="#s" x="603" y="46"/><use href="#b" x="723" y="43"/><use href="#s" x="751" y="106"/><use href="#s" x="799" y="122"/><use href="#s" x="310" y="114"/><use href="#m" x="374" y="184"/><use href="#b" x="558" y="182"/><use href="#s" x="99" y="348"/><use href="#b" x="282" y="408"/><use href="#s" x="535" y="435"/><use href="#s" x="402" y="460"/><use href="#s" x="321" y="472"/><use href="#s" x="578" y="485"/><use href="#b" x="683" y="471"/><use href="#s" x="745" y="492"/><use href="#s" x="176" y="523"/><use href="#b" x="57" y="541"/><use href="#b" x="123" y="557"/><use href="#b" x="529" y="527"/><use href="#s" x="299" y="562"/><use href="#s" x="257" y="617"/><use href="#m" x="505" y="611"/><use href="#m" x="590" y="629"/><use href="#s" x="645" y="639"/><use href="#b" x="180" y="651"/><use href="#b" x="304" y="647"/><use href="#s" x="702" y="660"/><use href="#b" x="791" y="665"/><use href="#s" x="515" y="669"/><use href="#b" x="283" y="694"/><use href="#s" x="413" y="700"/><use href="#b" x="131" y="720"/><use href="#b" x="520" y="735"/></g>
</g>
<g transform="translate(0 940) scale(.33333)">
<path d="M86 112l62-18q8-2 11 6l14 54q2 8-6 11l-58 18q-8 2-11-6L82 122zM98 128l14-5M104 145l40-12M110 160l44-14M0 142l24 20q5 6 0 14l-24 45M68 240q-40 14-40 58 0 70 60 76l70-20 55-28M130 330q10 5 18 0M265 328l36 36M273 328l20 26 60-26M318 328l40 46q8 6 0 2l-22-10-30-34M320 328l40 38M592 330l-58 60 30 52M592 330l22 8q30-6 32 12l-6 32M625 145q-6 30 12 52M645 145q-4 30 10 52M675 145v20h92v-20M682 165v30M698 165v30M740 165v30M755 165v30M692 170h30v20h-30zM785 145q6 30-2 50M805 145q8 30-4 50M694 328q5 28 24 26l100-30M735 380l60-28q20-6 33 4"/>
<path d="M182 445v-40h44v40M226 405V380h24v25h-24M364 440l40-50 102 32-18 24M412 376l96 34-5 18-98-32zM480 192q14-20 36 0"/>
<path d="M65 445q20-10 40 0"/>
<use href="#case" x="480" y="110"/><use href="#spark" x="314" y="85"/><use href="#spark" x="317" y="416"/><use href="#pin" x="310" y="178"/>
<circle cx="238" cy="126" r="18"/><path d="M224 140l-12 12"/>
<g><use href="#b" x="97" y="68"/><use href="#s" x="187" y="93"/><use href="#s" x="375" y="60"/><use href="#s" x="370" y="116"/><use href="#s" x="50" y="131"/><use href="#b" x="389" y="167"/><use href="#b" x="584" y="167"/><use href="#b" x="48" y="206"/><use href="#s" x="238" y="188"/><use href="#s" x="233" y="347"/><use href="#b" x="465" y="357"/><use href="#b" x="68" y="407"/><use href="#b" x="138" y="402"/><use href="#s" x="13" y="388"/><use href="#s" x="512" y="330"/></g>
</g>
<g transform="translate(276 940) scale(.33333)">
<path d="M20 145v13h98v-13M156 145v13h90v-13M135 215h28v30h-28zM163 191h27v24h-27zM32 196l5-12 22 8 10-8 12 10"/>
<circle cx="321" cy="174" r="47"/><circle cx="423" cy="174" r="47"/><circle cx="522" cy="174" r="47"/><path d="M275 150q-24 30 0 55 20 20 50 12M375 195q6 20 50 22M475 195q8 20 48 22M321 192l-20-20q-5-16 10-16 8 2 10 8 6-10 14-8 12 4 8 18zM398 160h52v32h-52zM412 160v32M436 160v32M415 160v-6h18v6M522 158v34M505 175h34"/>
<path d="M612 180l38-38M612 180l12 88 60-18M650 142h68l22 24-24 58M696 158q-30-14-34 2 2 12 18 14 20 6 14 18-14 10-30-2M680 145v55M643 238q-70-16-92 22 10 26 50 8 34-16 56-36"/>
<path d="M260 264l86 28-28 85-88-30zM226 262l28 14M222 275l28 10M212 302l30 10M208 314l30 14"/><ellipse cx="289" cy="333" rx="20" ry="15"/><circle cx="265" cy="315" r="8"/><circle cx="281" cy="306" r="8"/><circle cx="298" cy="306" r="8"/><circle cx="311" cy="319" r="8"/>
<path d="M86 380q-10-20 14-30 6-22 32-18 20-22 40 0 30-6 28 20 18 12 5 28M125 370q-8-22 8-20M145 365q10-20 22-2v16M175 378q5-12 15-2M0 360q16 8 8 22M32 330l28 14M538 385q0-20 18-24l64 22M655 330q15-30 30 10l4 20q-28 0-34-30zM828 228q-60 10-50 60M755 350q30 30 73 22M805 275q10-12 20 0v30q-14 10-20-8zM795 120q12-12 33-14M795 120l14 55q10 8 19 8M808 135l20-6M815 155h14M715 20l30-30M735 0l36 12M720 28l40-30"/>
<circle cx="412" cy="313" r="18"/><path d="M376 320h18"/><circle cx="808" cy="68" r="17"/>
<use href="#spark" x="362" y="254"/>
<g><use href="#b" x="232" y="219"/><use href="#m" x="174" y="274"/><use href="#m" x="446" y="257"/><use href="#b" x="513" y="254"/><use href="#m" x="583" y="215"/><use href="#m" x="648" y="230"/><use href="#m" x="562" y="300"/><use href="#b" x="605" y="316"/><use href="#b" x="490" y="321"/><use href="#s" x="536" y="335"/><use href="#s" x="363" y="369"/><use href="#s" x="459" y="378"/><use href="#b" x="762" y="206"/><use href="#b" x="781" y="407"/></g>
</g>
</g>
</svg>

<svg class="defs" width="0" height="0"><defs>
<path id="tail" d="M9 0C9 7 6 12.500 .3 15.200C0 15.500 .1 15.900 .6 15.900C6 15.800 10.500 14.800 14 12.500L20 6V0z"/>
<path id="ticks" d="M.9 7.600L4.600 11.400 13.300 1.200M9.200 11.400L18.600 1.200" fill="none" stroke="currentColor" stroke-width="1.700" stroke-linecap="round" stroke-linejoin="round"/>
</defs></svg>

<div class="log">
  <div class="msg in"><span class="text">iyee</span><time>19.42</time></div>
  <div class="msg in opened"><svg width="22" height="22" viewBox="0 0 22 22" fill="none" stroke="#a2a4a4" stroke-width="1.700" stroke-linecap="round"><path d="M10.500 1.500a9.500 9.500 0 0 0 0 19"/><path d="M14.400 2.300h.01M17.800 5.400h.01M19.500 10h.01M18.500 15h.01M14.800 19h.01" stroke-width="2.200"/></svg><span class="text">Opened</span><time>19.42</time></div>
  <div class="msg in last"><span class="text">maaf</span><time>19.42</time><svg class="tail" width="20" height="16"><use href="#tail"/></svg></div>

  <div class="msg out"><span class="text">beh</span><time>19.43</time><svg class="ticks" width="20" height="13"><use href="#ticks"/></svg></div>
  <div class="msg out last"><span class="text">bentarpi</span><time>19.43</time><svg class="ticks" width="20" height="13"><use href="#ticks"/></svg><svg class="tail" width="20" height="16"><use href="#tail"/></svg></div>

  <div class="msg in last"><span class="text">jlnma nah</span><time>19.43</time><svg class="tail" width="20" height="16"><use href="#tail"/></svg></div>

  <div class="msg out last"><span class="text">oke</span><time>19.43</time><svg class="ticks" width="20" height="13"><use href="#ticks"/></svg><svg class="tail" width="20" height="16"><use href="#tail"/></svg></div>

  <div class="msg in"><span class="text">nd cukup nnti kdg</span><time>19.43</time></div>
  <div class="msg in"><span class="text">tfmka nah</span><time>19.43</time></div>
  <div class="msg in"><span class="text">bsk pagi kugntiki</span><time>19.43</time></div>
  <div class="msg in last"><span class="text">masuk gajiku visit</span><time>19.43</time><svg class="tail" width="20" height="16"><use href="#tail"/></svg></div>

  <div class="msg out last"><span class="text">nda bisa bro</span><time>19.43</time><svg class="ticks" width="20" height="13"><use href="#ticks"/></svg><svg class="tail" width="20" height="16"><use href="#tail"/></svg></div>

  <div class="msg in"><span class="text">knp</span><time>19.43</time></div>
  <div class="msg in last"><span class="text">minta tolongka</span><time>19.43</time><svg class="tail" width="20" height="16"><use href="#tail"/></svg></div>

  <div class="msg out last"><span class="text">pakemi saja uangta dlu</span><time>19.43</time><svg class="ticks" width="20" height="13"><use href="#ticks"/></svg><svg class="tail" width="20" height="16"><use href="#tail"/></svg></div>

  <div class="msg in last"><span class="text">tdk ada smaa sklimi</span><time>19.44</time><svg class="tail" width="20" height="16"><use href="#tail"/></svg></div>

  <div class="msg out cut"><span class="text">sejuga nddmi saldoku</span></div>
</div>

<div class="date">Today</div>
<div class="scrollbar"></div>
<div class="down"><svg width="20" height="14" viewBox="0 0 20 14"><path d="M3 3l7 7 7-7" fill="none" stroke="#fff" stroke-width="3.600" stroke-linecap="round" stroke-linejoin="round"/></svg></div>
</main>

<footer class="composer">
  <svg class="plus" width="28" height="28" viewBox="0 0 28 28"><path d="M14 1.200v25.600M1.200 14h25.600" stroke="#fff" stroke-width="2.300" stroke-linecap="round"/></svg>
  <div class="field"><svg width="27" height="27" viewBox="0 0 27 27" fill="none" stroke="#fff" stroke-width="1.900" stroke-linejoin="round"><path d="M9 1.200h9a7.700 7.700 0 0 1 7.700 7.700v4.600c0 3-8.500 12.200-12 12.200H9A7.700 7.700 0 0 1 1.300 18V8.900A7.700 7.700 0 0 1 9 1.200zM14.600 25.400c.9-3 .2-5.600 1.400-8.200 1.500-2.800 6-1.800 9.400-2.900"/></svg></div>
  <svg class="camera" width="34" height="27" viewBox="0 0 34 27" fill="none" stroke="#fff" stroke-width="2" stroke-linejoin="round"><path d="M3.500 5h6.300c1.500 0 2.200-3.500 3.800-3.500h6.800c1.600 0 2.300 3.500 3.800 3.500h6.300q2.300 0 2.300 2.300v16q0 2.300-2.300 2.300h-27q-2.300 0-2.300-2.300v-16Q1.200 5 3.500 5z"/><circle cx="17" cy="14.900" r="6.500"/><circle cx="26.600" cy="9.700" r="1.300" fill="#fff" stroke="none"/></svg>
  <svg class="mic" width="24" height="34" viewBox="0 0 24 34" fill="none" stroke="#fff" stroke-width="2.100" stroke-linecap="round"><rect x="6.800" y="1.500" width="10.400" height="21" rx="5.200"/><path d="M1.600 17.500c0 6 4.500 9.700 10.400 9.700s10.400-3.700 10.400-9.700M12 27.400v5"/></svg>
</footer>
</body>
</html>
```
FILE: styles.css
```css
* { box-sizing: border-box; }
body {
  margin: 0;
  width: 552px;
  height: 1200px;
  display: flex;
  flex-direction: column;
  overflow: hidden;
  background: #111212;
  color: #fff;
  font-family: Inter, "Noto Sans", sans-serif;
}
svg { display: block; flex: none; }

.top { height: 159px; flex: none; padding-top: 32px; background: linear-gradient(100deg, #121212 50%, #111414); }
.status { display: flex; align-items: center; height: 26px; padding-left: 56.500px; }
.clock { width: 64.500px; font-size: 23px; font-weight: 700; letter-spacing: .4px; white-space: nowrap; }
.bell { margin-left: 5px; }
.signal { margin-left: 249.500px; }
.net { width: 27px; margin-left: 7.500px; font-size: 18.500px; font-weight: 600; }
.battery {
  display: flex;
  align-items: center;
  justify-content: center;
  width: 34.500px;
  height: 19px;
  margin-left: 8px;
  border-radius: 6px;
  background: linear-gradient(90deg, #36c45a 59%, #5a5b5b 59%);
}
.level { font-size: 16px; font-weight: 800; letter-spacing: .2px; }
.nub { margin-left: 1px; }

.nav { display: flex; align-items: center; height: 61px; margin-top: 26.500px; padding-left: 22px; }
.back, .avatar, .call { display: flex; align-items: center; flex: none; }
.back {
  width: 60.500px;
  height: 60.500px;
  padding-left: 9px;
  border: 1px solid #3c3d3d;
  border-radius: 50%;
  background: #202121;
  font-size: 22px;
  font-weight: 500;
}
.back span { margin-left: 8px; }
.avatar {
  justify-content: center;
  width: 55px;
  height: 55px;
  margin-left: 11.500px;
  border: 1px solid #143738;
  border-radius: 50%;
  background: #0b2b2d;
}
.name { width: 295.500px; margin: 0 0 0 11.500px; font-size: 22px; font-weight: 700; letter-spacing: .5px; white-space: nowrap; }
.call {
  width: 74px;
  height: 60.500px;
  padding-left: 9px;
  border: 1px solid #343938;
  border-radius: 31px;
  background: #1b2120;
}
.call svg + svg { margin-left: 1.500px; }

.chat { position: relative; height: 929px; flex: none; overflow: hidden; background: #0a0a0a; }
.doodles { position: absolute; left: 0; top: 0; }
.defs { position: absolute; }
.ink { fill: none; stroke: #222323; stroke-width: 3.600; stroke-linecap: round; stroke-linejoin: round; }
.log { position: relative; display: flex; flex-direction: column; padding: 10.200px 23px 0; }
.msg {
  position: relative;
  display: flex;
  align-items: flex-start;
  flex: none;
  height: 43.500px;
  margin-bottom: 6.050px;
  padding: 0 13px;
  border-radius: 15px;
}
.in { align-self: flex-start; background: #242626; color: #fafafa; }
.out { align-self: flex-end; padding-right: 12.500px; background: #144d37; color: #f4fbf7; }
.last { margin-bottom: 18.400px; }
.text { font-size: 21.500px; line-height: 26px; margin-top: 8px; font-weight: 560; letter-spacing: .02px; white-space: nowrap; }
time { width: 44.500px; margin: 19px 0 0 17px; font-size: 15px; line-height: 20px; letter-spacing: 1px; color: #a0a2a2; font-weight: 500; white-space: nowrap; }
.out time { color: #9dbbae; margin-left: 16.500px; }
.ticks { margin: 22px 0 0 2.500px; color: #a5c2b6; }
.opened { height: 38px; padding-left: 7px; }
.opened svg { margin-top: 8px; }
.opened .text { margin: 5.500px 0 0 7px; font-style: italic; color: #a2a4a4; }
.opened time { margin-top: 13px; }
.cut { padding-right: 96px; }
.tail { position: absolute; bottom: 0; left: -9px; fill: #242626; }
.out .tail { left: auto; right: -9px; fill: #144d37; transform: scaleX(-1); }

.date {
  position: absolute;
  left: 237px;
  top: 17.500px;
  width: 78px;
  height: 24px;
  border-radius: 12px;
  background: #151616;
  text-align: center;
  font-size: 16.500px;
  line-height: 24px;
  font-weight: 700;
  letter-spacing: .3px;
}
.scrollbar { position: absolute; right: 4px; top: 666px; width: 4px; height: 79px; border-radius: 2px; background: #7c7c7c; }
.down {
  position: absolute;
  right: 12.500px;
  top: 853px;
  display: flex;
  align-items: center;
  justify-content: center;
  width: 43.500px;
  height: 43.500px;
  border-radius: 50%;
  background: #242626;
}

.composer { display: flex; align-items: center; height: 112px; padding: 0 0 44px 18.500px; background: #111212; }
.composer .plus, .camera { position: relative; top: -.5px; }
.field {
  display: flex;
  align-items: center;
  justify-content: flex-end;
  width: 358.500px;
  height: 40px;
  margin-left: 18px;
  padding-right: 15px;
  border-radius: 20px;
  background: #2a2b2b;
}
.camera { margin-left: 24px; }
.mic { margin-left: 24px; margin-top: -3px; }
```
